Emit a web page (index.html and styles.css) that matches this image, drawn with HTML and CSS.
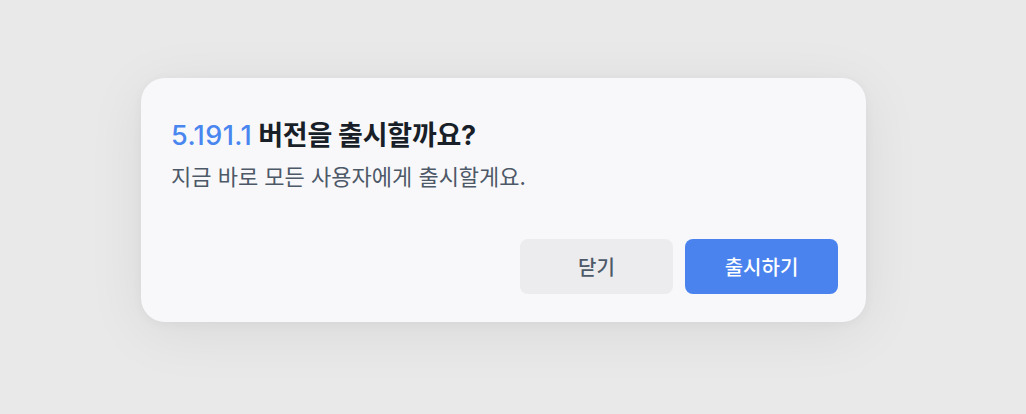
FILE: index.html
```html
<!DOCTYPE html>
<html lang="ko">
<head>
  <meta charset="UTF-8">
  <meta name="viewport" content="width=device-width, initial-scale=1.0">
  <title>버전 출시</title>
  <link rel="stylesheet" href="styles.css">
</head>
<body>
  <div class="dialog">
    <div class="dialog-body">
      <h2 class="title"><span class="version">5.191.1</span> 버전을 출시할까요?</h2>
      <p class="desc">지금 바로 모든 사용자에게 출시할게요.</p>
    </div>
    <div class="actions">
      <button type="button" class="btn btn-close">닫기</button>
      <button type="button" class="btn btn-primary">출시하기</button>
    </div>
  </div>
</body>
</html>
```

FILE: styles.css
```css
* {
  margin: 0;
  padding: 0;
  box-sizing: border-box;
}

body {
  font-family: Inter, 'Noto Sans CJK KR', sans-serif;
  background: #e9e9e9;
  min-height: 100vh;
  padding: 78px 0 0 141px;
}

.dialog {
  width: 725px;
  height: 244px;
  background: #f8f8fa;
  border-radius: 24px;
  box-shadow: 0 10px 60px rgba(0, 0, 0, 0.07), 0 2px 12px rgba(0, 0, 0, 0.04);
  padding: 40px 28px 28px 30px;
  display: flex;
  flex-direction: column;
  justify-content: space-between;
}

.title {
  font-size: 27px;
  font-weight: 700;
  color: #191f28;
  letter-spacing: -0.25px;
  line-height: 1.3;
}

.version {
  color: #4a86ef;
  font-weight: 500;
  letter-spacing: 0.4px;
}

.desc {
  margin-top: 9px;
  font-size: 22px;
  color: #4e5968;
  line-height: 1.4;
}

.actions {
  display: flex;
  justify-content: flex-end;
  gap: 12px;
}

.btn {
  width: 153px;
  height: 55px;
  border: none;
  border-radius: 8px;
  font-family: inherit;
  font-size: 20px;
  font-weight: 500;
  cursor: pointer;
}

.btn-close {
  background: #ececef;
  color: #4e5968;
}

.btn-primary {
  background: #4a83ee;
  color: #ffffff;
}
```
